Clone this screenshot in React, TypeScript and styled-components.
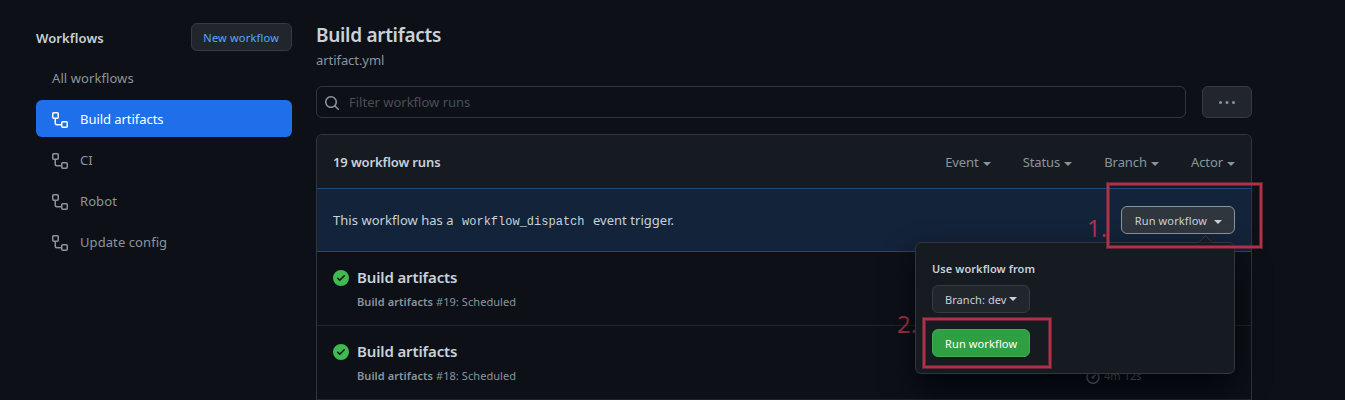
import React from 'react';
import styled, { createGlobalStyle, css } from 'styled-components';

const Global = createGlobalStyle`
  * { box-sizing: border-box; }
  html, body { margin: 0; background: #0d1117; overflow: hidden; }
  body { font-family: "Noto Sans", "Liberation Sans", sans-serif; font-size: 13px; line-height: 21px; color: #c9d1d9; }
  h1, h2, h3, p { margin: 0; }
  button { font-family: inherit; }
`;

const smallText = css`
  font-size: 11px;
  letter-spacing: 0.07px;
`;

const Page = styled.div`
  position: relative;
  display: flex;
  gap: 24px;
  height: 400px;
  padding: 23px 93px 0 36px;
  overflow: hidden;
`;

const Sidebar = styled.aside`
  width: 256px;
  flex: none;
`;

const SidebarHead = styled.div`
  display: flex;
  align-items: center;
  justify-content: space-between;
  height: 28px;
  margin-bottom: 8px;
`;

const SidebarTitle = styled.h2`
  font-size: 13px;
  font-weight: 600;
  letter-spacing: 0.1px;
  line-height: 21px;
  padding-top: 2px;
`;

const Button = styled.button<{ $tone?: 'link' | 'active' | 'primary' }>`
  display: inline-flex;
  align-items: center;
  height: 28px;
  padding: 2px 12px 0;
  border: 1px solid #363b42;
  border-radius: 6px;
  background: #21262d;
  color: #c9d1d9;
  ${smallText}
  line-height: 20px;
  white-space: nowrap;
  ${(p) => p.$tone === 'link' && css`color: #58a6ff; letter-spacing: 0.2px; padding-left: 11px;`}
  ${(p) => p.$tone === 'active' && css`background: #30363d; border-color: #8b949e; letter-spacing: 0.12px; padding-left: 13px;`}
  ${(p) => p.$tone === 'primary' && css`background: #2ea043; border-color: #43aa56; color: #fff; letter-spacing: 0.12px;`}
`;

const Nav = styled.nav`
  display: flex;
  flex-direction: column;
  gap: 4px;
`;

const NavItem = styled.a<{ $selected?: boolean }>`
  display: flex;
  align-items: center;
  gap: 12px;
  height: 37px;
  padding: 1px 16px 0;
  border-radius: 6px;
  letter-spacing: ${(p) => (p.$selected ? '-0.05px' : '0.08px')};
  color: ${(p) => (p.$selected ? '#fff' : '#8b949e')};
  background: ${(p) => (p.$selected ? '#1f6feb' : 'transparent')};
  svg { margin-top: 2px; }
`;

const Main = styled.main`
  flex: 1;
  min-width: 0;
`;

const Title = styled.h1`
  font-size: 19px;
  font-weight: 600;
  letter-spacing: -0.3px;
  line-height: 25px;
`;

const FileName = styled.p`
  color: #8b949e;
  letter-spacing: -0.06px;
  margin-top: 2px;
  line-height: 21px;
`;

const FilterBar = styled.div`
  display: flex;
  gap: 16px;
  margin: 15px 0 16px;
`;

const Filter = styled.div`
  flex: 1;
  display: flex;
  align-items: center;
  gap: 9px;
  height: 32px;
  padding: 0 7px;
  border: 1px solid #30363d;
  border-radius: 6px;
  color: #484f58;
  svg { color: #8b949e; margin-top: 2px; }
`;

const MoreButton = styled.button`
  display: flex;
  align-items: center;
  justify-content: center;
  width: 50px;
  height: 32px;
  padding: 2px 0 0;
  border: 1px solid #363b42;
  border-radius: 6px;
  background: #21262d;
  color: #8b949e;
`;

const Box = styled.section`
  border: 1px solid #30363d;
  border-bottom: 0;
  border-radius: 6px 6px 0 0;
`;

const BoxHeader = styled.header`
  display: flex;
  align-items: center;
  height: 53px;
  padding: 1px 16px 0;
  border-radius: 5px 5px 0 0;
  background: #161b22;
`;

const Count = styled.strong`
  flex: 1;
  font-weight: 600;
  letter-spacing: -0.12px;
`;

const Menus = styled.div`
  display: flex;
  gap: 32px;
  color: #8b949e;
  letter-spacing: -0.08px;
`;

const Menu = styled.span`
  display: flex;
  align-items: center;
  gap: 4px;
`;

const Caret = styled.i<{ $gap?: number; $up?: number }>`
  margin-left: ${(p) => p.$gap ?? 0}px;
  margin-bottom: ${(p) => p.$up ?? 0}px;
  margin-top: 3px;
  border: 4px solid transparent;
  border-top-color: currentColor;
  border-bottom: 0;
`;

const Dispatch = styled.div`
  display: flex;
  align-items: center;
  justify-content: space-between;
  height: 64px;
  padding: 0 16px;
  border: solid #1f4a85;
  border-width: 1px 0;
  background: #132339;
  > p { padding-top: 2px; letter-spacing: 0.04px; }
`;

const Code = styled.code`
  padding: 2px 5px;
  font-family: "Liberation Mono", monospace;
  font-size: 12px;
  letter-spacing: 0;
`;

const Anchor = styled.div`
  position: relative;
  height: 28px;
`;

const Popover = styled.div`
  position: absolute;
  z-index: 2;
  top: 36px;
  right: 0;
  display: flex;
  flex-direction: column;
  align-items: flex-start;
  gap: 16px;
  width: 320px;
  height: 132px;
  padding: 17px 16px 16px;
  border: 1px solid #30363d;
  border-radius: 6px;
  background: #161b22;
  box-shadow: 0 16px 32px rgba(1, 4, 9, 0.85);

  &::before {
    content: '';
    position: absolute;
    top: -6px;
    right: 23px;
    width: 10px;
    height: 10px;
    border: solid #30363d;
    border-width: 1px 0 0 1px;
    background: #161b22;
    transform: rotate(45deg);
    clip-path: polygon(0 0, 100% 0, 0 100%);
  }
`;

const Label = styled.strong`
  ${smallText}
  font-weight: 600;
  line-height: 18px;
  margin-bottom: -9px;
`;

const Row = styled.article`
  display: flex;
  align-items: flex-start;
  gap: 8px;
  height: 74px;
  padding: 16px;
  border-bottom: 1px solid #21262d;
  > svg { margin-top: 2px; color: #3fb950; }
`;

const RowText = styled.div`
  flex: 1;
  margin-top: -1px;
`;

const RunTitle = styled.h3`
  font-size: 15px;
  font-weight: 600;
  letter-spacing: -0.13px;
  line-height: 21px;
`;

const RunMeta = styled.p`
  margin-top: 5px;
  color: #8b949e;
  ${smallText}
  line-height: 18px;
  b { font-weight: 600; }
`;

const Duration = styled.span`
  display: flex;
  align-items: center;
  gap: 3px;
  width: 150px;
  margin-top: 25px;
  color: #8b949e;
  ${smallText}
  line-height: 18px;
`;

const Mark = styled.div<{ $x: number; $y: number; $w: number; $h: number }>`
  position: absolute;
  z-index: 3;
  left: ${(p) => p.$x}px;
  top: ${(p) => p.$y}px;
  width: ${(p) => p.$w}px;
  height: ${(p) => p.$h}px;
  border: 1px solid rgba(176, 49, 73, 0.5);
  &::before {
    content: '';
    position: absolute;
    inset: 0;
    border: 2px solid #b13149;
  }
  &::after {
    content: '';
    position: absolute;
    inset: 2px;
    border: 1px solid rgba(176, 49, 73, 0.5);
  }
`;

const Step = styled.span<{ $x: number; $y: number }>`
  position: absolute;
  z-index: 1;
  left: ${(p) => p.$x}px;
  top: ${(p) => p.$y}px;
  color: #b13149;
  font-size: 24px;
  line-height: 32px;
`;

const paths = {
  workflow:
    'M0 1.75C0 .784.784 0 1.75 0h3.5C6.216 0 7 .784 7 1.75v3.5A1.75 1.75 0 015.25 7H4v4a1 1 0 001 1h4v-1.25C9 9.784 9.784 9 10.75 9h3.5c.966 0 1.75.784 1.75 1.75v3.5A1.75 1.75 0 0114.25 16h-3.5A1.75 1.75 0 019 14.25v-.75H5A2.5 2.5 0 012.5 11V7h-.75A1.75 1.75 0 010 5.25v-3.5zm1.75-.25a.25.25 0 00-.25.25v3.5c0 .138.112.25.25.25h3.5a.25.25 0 00.25-.25v-3.5a.25.25 0 00-.25-.25h-3.5zm9 9a.25.25 0 00-.25.25v3.5c0 .138.112.25.25.25h3.5a.25.25 0 00.25-.25v-3.5a.25.25 0 00-.25-.25h-3.5z',
  check:
    'M8 16A8 8 0 108 0a8 8 0 000 16zm3.78-9.72a.75.75 0 00-1.06-1.06L6.75 9.19 5.28 7.72a.75.75 0 00-1.06 1.06l2 2a.75.75 0 001.06 0l4.5-4.5z',
  search:
    'M11.5 7a4.499 4.499 0 11-8.998 0A4.499 4.499 0 0111.5 7zm-.82 4.74a6 6 0 111.06-1.06l3.04 3.04a.75.75 0 11-1.06 1.06l-3.04-3.04z',
  kebab:
    'M8 9a1.5 1.5 0 100-3 1.5 1.5 0 000 3zM1.5 9a1.5 1.5 0 100-3 1.5 1.5 0 000 3zm13 0a1.5 1.5 0 100-3 1.5 1.5 0 000 3z',
  stopwatch:
    'M5.75.75A.75.75 0 016.5 0h3a.75.75 0 010 1.5h-.75v1l-.001.041a6.718 6.718 0 013.464 1.435l.007-.006.75-.75a.75.75 0 111.06 1.06l-.75.75-.006.007a6.75 6.75 0 11-10.548 0L2.72 5.03l-.75-.75a.75.75 0 011.06-1.06l.75.75.007.006A6.718 6.718 0 017.25 2.541a.756.756 0 010-.041v-1H6.5a.75.75 0 01-.75-.75zM8 14.5A5.25 5.25 0 108 4a5.25 5.25 0 000 10.5zm.389-6.7l1.33-1.33a.75.75 0 111.061 1.06L9.45 8.861A1.502 1.502 0 018 10.75a1.5 1.5 0 11.389-2.95z',
};

const Svg = styled.svg`
  flex: none;
  fill: currentColor;
  fill-rule: evenodd;
`;

function Icon({ name }: { name: keyof typeof paths }) {
  return (
    <Svg width="16" height="16" viewBox="0 0 16 16">
      <path d={paths[name]} />
    </Svg>
  );
}

const workflows = ['Build artifacts', 'CI', 'Robot', 'Update config'];
const filters = ['Event', 'Status', 'Branch', 'Actor'];
const runs: { id: number; duration?: string }[] = [{ id: 19 }, { id: 18, duration: '4m 12s' }];

export default function App() {
  return (
    <>
      <Global />
      <Page>
        <Sidebar>
          <SidebarHead>
            <SidebarTitle>Workflows</SidebarTitle>
            <Button $tone="link">New workflow</Button>
          </SidebarHead>
          <Nav>
            <NavItem>All workflows</NavItem>
            {workflows.map((name, i) => (
              <NavItem key={name} $selected={i === 0}>
                <Icon name="workflow" />
                {name}
              </NavItem>
            ))}
          </Nav>
        </Sidebar>
        <Main>
          <Title>Build artifacts</Title>
          <FileName>artifact.yml</FileName>
          <FilterBar>
            <Filter>
              <Icon name="search" />
              Filter workflow runs
            </Filter>
            <MoreButton aria-label="More options">
              <Icon name="kebab" />
            </MoreButton>
          </FilterBar>
          <Box>
            <BoxHeader>
              <Count>19 workflow runs</Count>
              <Menus>
                {filters.map((f) => (
                  <Menu key={f}>
                    {f}
                    <Caret />
                  </Menu>
                ))}
              </Menus>
            </BoxHeader>
            <Dispatch>
              <p>
                This workflow has a <Code>workflow_dispatch</Code> event trigger.
              </p>
              <Anchor>
                <Button $tone="active">
                  Run workflow
                  <Caret $gap={7} $up={1} />
                </Button>
                <Popover>
                  <Label>Use workflow from</Label>
                  <Button>
                    Branch: dev
                    <Caret $gap={3} $up={5} />
                  </Button>
                  <Button $tone="primary">Run workflow</Button>
                </Popover>
              </Anchor>
            </Dispatch>
            {runs.map((run) => (
              <Row key={run.id}>
                <Icon name="check" />
                <RowText>
                  <RunTitle>Build artifacts</RunTitle>
                  <RunMeta>
                    <b>Build artifacts</b> #{run.id}: Scheduled
                  </RunMeta>
                </RowText>
                {run.duration && (
                  <Duration>
                    <Icon name="stopwatch" />
                    {run.duration}
                  </Duration>
                )}
              </Row>
            ))}
          </Box>
        </Main>
        <Step $x={1087} $y={212}>1.</Step>
        <Step $x={897} $y={308}>2.</Step>
        <Mark $x={1106} $y={182} $w={157} $h={67} />
        <Mark $x={922} $y={317} $w={130} $h={52} />
      </Page>
    </>
  );
}
